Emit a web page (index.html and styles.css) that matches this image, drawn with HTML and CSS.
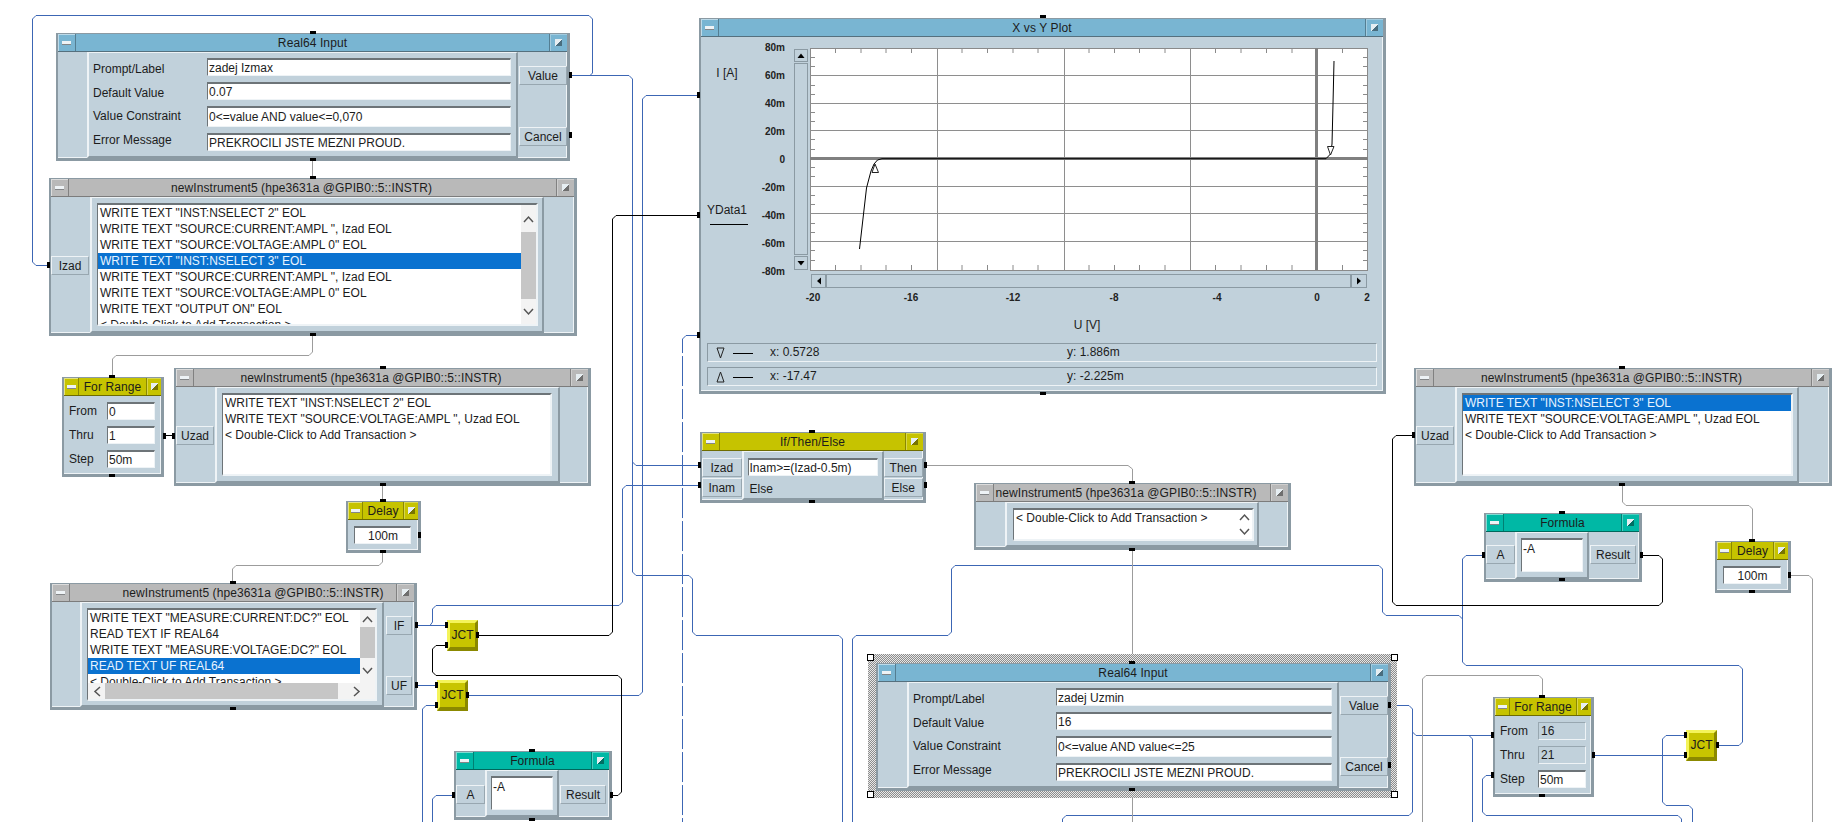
FILE: index.html
```html
<!DOCTYPE html>
<html lang="en">

<head>
    <meta charset="UTF-8">
    <title>VEE program</title>
    <link rel="stylesheet" href="styles.css">
</head>

<body>
    <main class="canvas">

        <!-- wires, under the nodes -->
        <svg class="wires" width="1844" height="822">
            <g class="blue">
                <path d="M572 75.5H629L632.5 79V572L636 575.5H689L692.5 579V632L696 635.5H839L842.5 639V822" />
                <path d="M632.5 462L636 465.5H698" />
                <path d="M590 75.5L592.5 73V19L589 15.5H36L32.5 19V262L36 265.5H47" />
                <path d="M698 485.5H626L622.5 489V602L619 605.5H436L432.5 609V622L430 625.5" />
                <path d="M418 625.5H445" />
                <path d="M697 95.5H646L642.5 99V692L639 695.5H469" />
                <path d="M418 685.5H435" />
                <path d="M435 705.5H426L422.5 709V822" />
                <path d="M452 795.5H436L432.5 799V822" />
                <path class="dash" d="M697 335.5H686L682.5 339V822" />
                <path d="M852.5 822V639L856 635.5H948L951.5 632V569L955 565.5H1379L1382.5 569V612L1386 615.5H1459L1462.5 619" />
                <path d="M1482 555.5H1466L1462.5 559V662L1466 665.5H1739L1742.5 669V742L1739 745.5H1719" />
                <path d="M1062.5 822V819L1066 815.5H1409L1412.5 812V709L1409 705.5H1391" />
                <path d="M1412.5 732L1416 735.5H1491" />
                <path d="M1469 735.5L1472.5 739V822" />
                <path d="M1595 755.5H1684" />
                <path d="M1491 775.5H1486L1482.5 779V812L1486 815.5H1678L1681.5 819V822" />
                <path d="M1684 735.5H1666L1662.5 739V802L1666 805.5H1689L1692.5 809V822" />
            </g>
            <g class="black">
                <path d="M479 635.5H609L612.5 632V219L616 215.5H697" />
                <path d="M445 645.5H436L432.5 649V672L436 675.5H618L621.5 679V792L618 795.5H613" />
                <path d="M1643 555.5H1659L1662.5 559V602L1659 605.5H1396L1392.5 602V439L1396 435.5H1412" />
                <path d="M166 435.5H172" />
            </g>
            <g class="gray">
                <path d="M312.5 161V176" />
                <path d="M312.5 336V352L309 355.5H116L112.5 359V375" />
                <path d="M382.5 486V499" />
                <path d="M382.5 553V562L379 565.5H236L232.5 569V581" />
                <path d="M927 465.5H1128L1132.5 469V481" />
                <path d="M1132.5 550V661" />
                <path d="M1132.5 791V822" />
                <path d="M1622.5 486V502L1626 505.5H1749L1752.5 509V539" />
                <path d="M1791 575.5H1809L1812.5 579V822" />
                <path d="M1542.5 695V679L1539 675.5H1426L1422.5 679V822" />
            </g>
        </svg>

        <!-- selected object: hatching and handles -->
        <div class="hatch">
            <span class="handle tl"></span>
            <span class="handle tr"></span>
            <span class="handle bl"></span>
            <span class="handle br"></span>
        </div>

        <!-- Real64 Input -->
        <section class="node real real-a">
            <div class="title blue-bar"><span class="min"></span><span class="name">Real64 Input</span><span class="max"></span></div>
            <div class="body">
                <div class="real-gutter"></div>
                <div class="panel real-panel">
                    <div class="labels">
                        <div>Prompt/Label</div>
                        <div>Default Value</div>
                        <div>Value Constraint</div>
                        <div>Error Message</div>
                    </div>
                    <div class="fields">
                        <div class="field">zadej Izmax</div>
                        <div class="field">0.07</div>
                        <div class="field tall">0&lt;=value AND value&lt;=0,070</div>
                        <div class="field">PREKROCILI JSTE MEZNI PROUD.</div>
                    </div>
                </div>
                <div class="real-side">
                    <div class="btn">Value</div>
                    <div class="btn">Cancel</div>
                </div>
            </div>
        </section>

        <section class="node real real-b">
            <div class="title blue-bar"><span class="min"></span><span class="name">Real64 Input</span><span class="max"></span></div>
            <div class="body">
                <div class="real-gutter"></div>
                <div class="panel real-panel">
                    <div class="labels wide">
                        <div>Prompt/Label</div>
                        <div>Default Value</div>
                        <div>Value Constraint</div>
                        <div>Error Message</div>
                    </div>
                    <div class="fields">
                        <div class="field">zadej Uzmin</div>
                        <div class="field">16</div>
                        <div class="field tall">0&lt;=value AND value&lt;=25</div>
                        <div class="field">PREKROCILI JSTE MEZNI PROUD.</div>
                    </div>
                </div>
                <div class="real-side">
                    <div class="btn">Value</div>
                    <div class="btn">Cancel</div>
                </div>
            </div>
        </section>

        <!-- instrument objects -->
        <section class="node inst inst-a">
            <div class="title gray-bar"><span class="min"></span><span class="name">newInstrument5 (hpe3631a @GPIB0::5::INSTR)</span><span class="max"></span></div>
            <div class="body">
                <div class="gutter"><div class="btn">Izad</div></div>
                <div class="panel">
                    <div class="list">
                        <div class="rows">
                            <div class="row">WRITE TEXT "INST:NSELECT 2" EOL</div>
                            <div class="row">WRITE TEXT "SOURCE:CURRENT:AMPL ", Izad EOL</div>
                            <div class="row">WRITE TEXT "SOURCE:VOLTAGE:AMPL 0" EOL</div>
                            <div class="row sel">WRITE TEXT "INST:NSELECT 3" EOL</div>
                            <div class="row">WRITE TEXT "SOURCE:CURRENT:AMPL ", Izad EOL</div>
                            <div class="row">WRITE TEXT "SOURCE:VOLTAGE:AMPL 0" EOL</div>
                            <div class="row">WRITE TEXT "OUTPUT ON" EOL</div>
                            <div class="row">&lt; Double-Click to Add Transaction &gt;</div>
                        </div>
                        <div class="vscroll">
                            <div class="arrow up-a"><svg width="11" height="8"><path d="M1 7L5.5 2L10 7" /></svg></div>
                            <div class="thumb thumb-a"></div>
                            <div class="arrow"><svg width="11" height="8"><path d="M1 1L5.5 6L10 1" /></svg></div>
                        </div>
                    </div>
                </div>
                <div class="gutter"></div>
            </div>
        </section>

        <section class="node inst inst-b">
            <div class="title gray-bar"><span class="min"></span><span class="name">newInstrument5 (hpe3631a @GPIB0::5::INSTR)</span><span class="max"></span></div>
            <div class="body">
                <div class="gutter"><div class="btn">Uzad</div></div>
                <div class="panel">
                    <div class="list">
                        <div class="rows">
                            <div class="row">WRITE TEXT "INST:NSELECT 2" EOL</div>
                            <div class="row">WRITE TEXT "SOURCE:VOLTAGE:AMPL ", Uzad EOL</div>
                            <div class="row">&lt; Double-Click to Add Transaction &gt;</div>
                        </div>
                    </div>
                </div>
                <div class="gutter"></div>
            </div>
        </section>

        <section class="node inst inst-c">
            <div class="title gray-bar"><span class="min"></span><span class="name">newInstrument5 (hpe3631a @GPIB0::5::INSTR)</span><span class="max"></span></div>
            <div class="body">
                <div class="gutter"></div>
                <div class="panel">
                    <div class="list stacked">
                        <div class="list-top">
                            <div class="rows">
                                <div class="row">WRITE TEXT "MEASURE:CURRENT:DC?" EOL</div>
                                <div class="row">READ TEXT IF REAL64</div>
                                <div class="row">WRITE TEXT "MEASURE:VOLTAGE:DC?" EOL</div>
                                <div class="row sel">READ TEXT UF REAL64</div>
                                <div class="row">&lt; Double-Click to Add Transaction &gt;</div>
                            </div>
                            <div class="vscroll">
                                <div class="arrow up-c"><svg width="11" height="8"><path d="M1 7L5.5 2L10 7" /></svg></div>
                                <div class="thumb thumb-c"></div>
                                <div class="arrow"><svg width="11" height="8"><path d="M1 1L5.5 6L10 1" /></svg></div>
                            </div>
                        </div>
                        <div class="hscroll">
                            <div class="arrow left-c"><svg width="8" height="11"><path d="M7 1L2 5.5L7 10" /></svg></div>
                            <div class="thumb thumb-h"></div>
                            <div class="arrow"><svg width="8" height="11"><path d="M1 1L6 5.5L1 10" /></svg></div>
                        </div>
                    </div>
                </div>
                <div class="side-c">
                    <div class="btn">IF</div>
                    <div class="btn">UF</div>
                </div>
            </div>
        </section>

        <section class="node inst inst-d">
            <div class="title gray-bar"><span class="min"></span><span class="name">newInstrument5 (hpe3631a @GPIB0::5::INSTR)</span><span class="max"></span></div>
            <div class="body">
                <div class="gutter"></div>
                <div class="panel">
                    <div class="list">
                        <div class="rows">
                            <div class="row">&lt; Double-Click to Add Transaction &gt;</div>
                        </div>
                        <div class="vscroll plain">
                            <div class="arrow"><svg width="11" height="8"><path d="M1 7L5.5 2L10 7" /></svg></div>
                            <div class="arrow"><svg width="11" height="8"><path d="M1 1L5.5 6L10 1" /></svg></div>
                        </div>
                    </div>
                </div>
                <div class="gutter"></div>
            </div>
        </section>

        <section class="node inst inst-e">
            <div class="title gray-bar"><span class="min"></span><span class="name">newInstrument5 (hpe3631a @GPIB0::5::INSTR)</span><span class="max"></span></div>
            <div class="body">
                <div class="gutter"><div class="btn">Uzad</div></div>
                <div class="panel">
                    <div class="list">
                        <div class="rows">
                            <div class="row sel">WRITE TEXT "INST:NSELECT 3" EOL</div>
                            <div class="row">WRITE TEXT "SOURCE:VOLTAGE:AMPL ", Uzad EOL</div>
                            <div class="row">&lt; Double-Click to Add Transaction &gt;</div>
                        </div>
                    </div>
                </div>
                <div class="gutter"></div>
            </div>
        </section>

        <!-- For Range -->
        <section class="node range range-a">
            <div class="title yellow-bar"><span class="min small"></span><span class="name">For Range</span><span class="max small"></span></div>
            <div class="range-grid">
                <div>From</div><div class="field">0</div>
                <div>Thru</div><div class="field">1</div>
                <div>Step</div><div class="field">50m</div>
            </div>
        </section>

        <section class="node range range-b">
            <div class="title yellow-bar"><span class="min small"></span><span class="name">For Range</span><span class="max small"></span></div>
            <div class="range-grid">
                <div>From</div><div class="field locked">16</div>
                <div>Thru</div><div class="field locked">21</div>
                <div>Step</div><div class="field">50m</div>
            </div>
        </section>

        <!-- Delay -->
        <section class="node delay delay-a">
            <div class="title yellow-bar"><span class="min small"></span><span class="name">Delay</span><span class="max small"></span></div>
            <div class="delay-body"><div class="field center">100m</div></div>
        </section>

        <section class="node delay delay-b">
            <div class="title yellow-bar"><span class="min small"></span><span class="name">Delay</span><span class="max small"></span></div>
            <div class="delay-body"><div class="field center">100m</div></div>
        </section>

        <!-- Formula -->
        <section class="node formula formula-a">
            <div class="title teal-bar"><span class="min"></span><span class="name">Formula</span><span class="max"></span></div>
            <div class="body">
                <div class="formula-in"><div class="btn">A</div></div>
                <div class="panel formula-panel"><div class="field expr">-A</div></div>
                <div class="formula-out"><div class="btn">Result</div></div>
            </div>
        </section>

        <section class="node formula formula-b">
            <div class="title teal-bar"><span class="min"></span><span class="name">Formula</span><span class="max"></span></div>
            <div class="body">
                <div class="formula-in"><div class="btn">A</div></div>
                <div class="panel formula-panel"><div class="field expr">-A</div></div>
                <div class="formula-out"><div class="btn">Result</div></div>
            </div>
        </section>

        <!-- If/Then/Else -->
        <section class="node ifelse">
            <div class="title yellow-bar"><span class="min"></span><span class="name">If/Then/Else</span><span class="max"></span></div>
            <div class="body">
                <div class="if-side">
                    <div class="btn">Izad</div>
                    <div class="btn">Inam</div>
                </div>
                <div class="panel if-panel">
                    <div class="field">Inam&gt;=(Izad-0.5m)</div>
                    <div class="else">Else</div>
                </div>
                <div class="if-side">
                    <div class="btn">Then</div>
                    <div class="btn">Else</div>
                </div>
            </div>
        </section>

        <!-- junctions -->
        <div class="jct jct-a">JCT</div>
        <div class="jct jct-b">JCT</div>
        <div class="jct jct-c">JCT</div>

        <!-- X vs Y Plot -->
        <section class="node plot">
            <div class="title blue-bar"><span class="min"></span><span class="name">X vs Y Plot</span><span class="max"></span></div>
            <div class="plot-body">
                <svg class="chart" width="682" height="306" viewBox="701 36 682 306">
                    <rect class="area" x="810.5" y="47.5" width="557" height="222" />
                    <path class="tick" d="M835.5 47v5M861 47v5M886 47v5M911.5 47v5M962 47v5M987.5 47v5M1013 47v5M1038 47v5M1089 47v5M1114.5 47v5M1139.5 47v5M1165 47v5M1215.5 47v5M1241 47v5M1266.5 47v5M1292 47v5M1342.5 47v5M835.5 264v5M861 264v5M886 264v5M911.5 264v5M962 264v5M987.5 264v5M1013 264v5M1038 264v5M1089 264v5M1114.5 264v5M1139.5 264v5M1165 264v5M1215.5 264v5M1241 264v5M1266.5 264v5M1292 264v5M1342.5 264v5" />
                    <path class="tick" d="M810 56.5h5M810 65.5h5M810 84.5h5M810 93.5h5M810 111.5h5M810 120.5h5M810 138.5h5M810 148.5h5M810 166.5h5M810 175.5h5M810 194.5h5M810 203.5h5M810 222.5h5M810 231.5h5M810 249.5h5M810 259.5h5M1363 56.5h5M1363 65.5h5M1363 84.5h5M1363 93.5h5M1363 111.5h5M1363 120.5h5M1363 138.5h5M1363 148.5h5M1363 166.5h5M1363 175.5h5M1363 194.5h5M1363 203.5h5M1363 222.5h5M1363 231.5h5M1363 249.5h5M1363 259.5h5" />
                    <path class="grid" d="M937.5 47v222M1064.5 47v222M1190.5 47v222M810 74.5h558M810 102.5h558M810 129.5h558M810 185.5h558M810 212.5h558M810 240.5h558" />
                    <path class="grid major" d="M1316.5 47v222M810 157.5h558" />
                    <path class="curve" d="M859.5 248L866.5 187L871 170L874 163L877.5 159L882 157.7H1326L1330.5 153L1332 143L1333 103L1334 60" />
                    <path class="marker" d="M875 163L872 171.5H878.5Z" />
                    <path class="marker" d="M1327.5 145.5H1334L1330.5 154Z" />

                    <!-- scrollbars -->
                    <rect class="sb" x="794.5" y="48.5" width="13" height="12" />
                    <rect class="sb" x="794.5" y="62.5" width="13" height="191" />
                    <rect class="sb" x="794.5" y="255.5" width="13" height="13" />
                    <path class="tri" d="M797.5 57L801 52.5L804.5 57Z" />
                    <path class="tri" d="M797.5 260L801 264.5L804.5 260Z" />
                    <rect class="sb" x="811.5" y="273.5" width="14" height="13" />
                    <rect class="sb" x="826.5" y="273.5" width="524" height="13" />
                    <rect class="sb" x="1351.5" y="273.5" width="15" height="13" />
                    <path class="tri" d="M821 276.5L817 280L821 283.5Z" />
                    <path class="tri" d="M1357 276.5L1361 280L1357 283.5Z" />

                    <!-- axis text -->
                    <g class="ylab">
                        <text x="785" y="50">80m</text>
                        <text x="785" y="78">60m</text>
                        <text x="785" y="106">40m</text>
                        <text x="785" y="134">20m</text>
                        <text x="785" y="162">0</text>
                        <text x="785" y="190">-20m</text>
                        <text x="785" y="218">-40m</text>
                        <text x="785" y="246">-60m</text>
                        <text x="785" y="274">-80m</text>
                    </g>
                    <g class="xlab">
                        <text x="813" y="300">-20</text>
                        <text x="911" y="300">-16</text>
                        <text x="1013" y="300">-12</text>
                        <text x="1114" y="300">-8</text>
                        <text x="1217" y="300">-4</text>
                        <text x="1317" y="300">0</text>
                        <text x="1367" y="300">2</text>
                    </g>
                    <text class="axname" x="727" y="76">I [A]</text>
                    <text class="axname" x="1087" y="328">U [V]</text>
                    <text class="axname" x="727" y="213">YData1</text>
                    <path class="curve" d="M710 223.5h38" />
                </svg>
                <div class="cursor">
                    <svg class="cursor-mark" width="44" height="14"><path d="M1 2H8L4.5 12Z" /><path class="stem" d="M17 7.5H37" /></svg>
                    <span class="cx">x: 0.5728</span>
                    <span>y: 1.886m</span>
                </div>
                <div class="cursor">
                    <svg class="cursor-mark" width="44" height="14"><path d="M4.5 2L1 12H8Z" /><path class="stem" d="M17 7.5H37" /></svg>
                    <span class="cx">x: -17.47</span>
                    <span>y: -2.225m</span>
                </div>
            </div>
        </section>

        <!-- pins, over the nodes -->
        <svg class="pins" width="1844" height="822">
            <g class="pin-h">
                <rect x="310" y="31" /><rect x="310" y="158" />
                <rect x="310" y="176" /><rect x="310" y="333" />
                <rect x="109" y="375" /><rect x="109" y="474" />
                <rect x="380" y="366" /><rect x="380" y="483" />
                <rect x="380" y="499" /><rect x="380" y="550" />
                <rect x="230" y="581" /><rect x="230" y="707" />
                <rect x="529" y="749" /><rect x="529" y="818" />
                <rect x="1040" y="15" /><rect x="1040" y="392" />
                <rect x="809" y="430" /><rect x="809" y="500" />
                <rect x="1129" y="481" /><rect x="1129" y="548" />
                <rect x="1129" y="661" /><rect x="1129" y="788" />
                <rect x="1619" y="366" /><rect x="1619" y="483" />
                <rect x="1559" y="511" /><rect x="1559" y="578" />
                <rect x="1749" y="539" /><rect x="1749" y="590" />
                <rect x="1539" y="695" /><rect x="1539" y="794" />
            </g>
            <g class="pin-v">
                <rect x="569" y="72" /><rect x="569" y="132" />
                <rect x="47" y="262" />
                <rect x="163" y="433" />
                <rect x="172" y="433" />
                <rect x="418" y="532" />
                <rect x="415" y="622" /><rect x="415" y="682" />
                <rect x="445" y="622" /><rect x="445" y="642" /><rect x="476" y="632" />
                <rect x="435" y="682" /><rect x="435" y="702" /><rect x="466" y="692" />
                <rect x="452" y="792" /><rect x="610" y="792" />
                <rect x="697" y="92" /><rect x="697" y="212" /><rect x="697" y="332" />
                <rect x="698" y="462" /><rect x="698" y="482" />
                <rect x="924" y="462" /><rect x="924" y="482" />
                <rect x="1388" y="702" /><rect x="1388" y="762" />
                <rect x="1412" y="432" />
                <rect x="1482" y="552" /><rect x="1640" y="552" />
                <rect x="1788" y="572" />
                <rect x="1491" y="732" /><rect x="1491" y="772" /><rect x="1592" y="752" />
                <rect x="1684" y="732" /><rect x="1684" y="752" /><rect x="1716" y="742" />
            </g>
        </svg>
    </main>
</body>

</html>
```

FILE: styles.css
```css
* {
    margin: 0;
    padding: 0;
    box-sizing: border-box;
}

body {
    width: 1844px;
    height: 822px;
    overflow: hidden;
    background-color: #fff;
    font-family: "Liberation Sans", Arial, sans-serif;
    font-size: 12px;
    color: #1c1c1c;
}

.canvas {
    position: relative;
    width: 1844px;
    height: 822px;
    overflow: hidden;
}

/* wires and pins */

.wires,
.pins {
    position: absolute;
    top: 0;
    left: 0;
}

.wires path {
    fill: none;
    stroke-width: 1;
}

.blue path {
    stroke: #3c66b4;
}

.black path {
    stroke: #000;
}

.gray path {
    stroke: #9c9c9c;
}

.wires .dash {
    stroke-dasharray: 30 3;
}

.pins rect {
    fill: #000;
}

.pin-h rect {
    width: 6px;
    height: 3px;
}

.pin-v rect {
    width: 3px;
    height: 6px;
}

/* node frame */

.node {
    position: absolute;
    display: flex;
    flex-direction: column;
    background-color: #c1d1db;
    border-style: solid;
    border-color: #8b9aa3;
    border-width: 1px 3px 3px 2px;
    box-shadow: inset -1px -1px 0 #eef3f6;
}

.title {
    flex: none;
    display: flex;
    height: 18px;
    line-height: 18px;
    border-bottom: 1px solid #55707e;
}

.blue-bar {
    background-color: #79b5d2;
}

.gray-bar {
    background-color: #b9b9b9;
    border-bottom-color: #7c7c7c;
}

.yellow-bar {
    background-color: #c6c300;
    border-bottom-color: #6e6c00;
}

.teal-bar {
    background-color: #00b8a5;
    border-bottom-color: #00685c;
}

.name {
    flex: 1;
    min-width: 0;
    text-align: center;
    letter-spacing: .1px;
    white-space: nowrap;
}

.min,
.max {
    flex: none;
    display: flex;
    align-items: center;
    justify-content: center;
    width: 18px;
}

.min {
    border-right: 1px solid rgba(0, 0, 0, .3);
    box-shadow: inset 1px 1px 0 rgba(255, 255, 255, .5);
}

.max {
    border-left: 1px solid rgba(0, 0, 0, .3);
    box-shadow: inset 1px 1px 0 rgba(255, 255, 255, .3);
}

.min::after {
    content: "";
    width: 9px;
    height: 3px;
    background-color: #eef3f6;
    border-bottom: 1px solid rgba(0, 0, 0, .45);
}

/* little square, light corner over dark corner */
.max::after {
    content: "";
    width: 7px;
    height: 7px;
    background-image: linear-gradient(135deg, #e6eef2 0 55%, rgba(0, 0, 0, .4) 55%);
}

.small {
    width: 15px;
}

.body {
    flex: 1;
    display: flex;
    min-height: 0;
}

.panel {
    background-color: #c1d1db;
    border-style: solid;
    border-color: #eef3f6 #8b9aa3 #8b9aa3 #eef3f6;
    border-width: 1px 2px 2px 2px;
}

.btn {
    height: 19px;
    line-height: 18px;
    text-align: center;
    background-color: #c1d1db;
    border-style: solid;
    border-color: #eef3f6 #98a7b0 #98a7b0 #eef3f6;
    border-width: 1px;
}

.field {
    height: 18px;
    line-height: 16px;
    padding-left: 1px;
    background-color: #fff;
    white-space: nowrap;
    overflow: hidden;
    border-style: solid;
    border-color: #6d7478 #eef3f6 #eef3f6 #6d7478;
    border-width: 2px 1px 1px 1px;
}

.locked {
    background-color: #c1d1db;
    border-color: #98a7b0 #eef3f6 #eef3f6 #98a7b0;
    border-width: 1px;
    padding-left: 2px;
}

.center {
    text-align: center;
}

/* Real64 Input */

.real {
    width: 514px;
    height: 128px;
}

.real-a {
    left: 56px;
    top: 33px;
}

.real-b {
    left: 876px;
    top: 663px;
    width: 515px;
}

.real-gutter {
    flex: none;
    width: 29px;
}

.real-panel {
    flex: 1;
    display: flex;
    padding: 4px 5px 0 4px;
}

.labels {
    flex: none;
    width: 114px;
    padding-top: 1px;
    line-height: 23.67px;
}

.labels.wide {
    width: 143px;
}

.fields {
    flex: 1;
    display: grid;
    grid-template-rows: 18px 18px 21px 18px;
    grid-auto-rows: 18px;
    align-content: start;
    row-gap: 6px;
    padding-top: 1px;
}

.fields .field {
    height: auto;
}

.fields .tall {
    line-height: 18px;
}

.real-side {
    flex: none;
    width: 49px;
    padding: 14px 0 0 1px;
    display: flex;
    flex-direction: column;
    gap: 42px;
}

/* instrument objects */

.inst-a {
    left: 49px;
    top: 178px;
    width: 528px;
    height: 158px;
}

.inst-b {
    left: 174px;
    top: 368px;
    width: 417px;
    height: 118px;
}

.inst-c {
    left: 50px;
    top: 583px;
    width: 367px;
    height: 127px;
}

.inst-d {
    left: 974px;
    top: 483px;
    width: 317px;
    height: 67px;
}

.inst-e {
    left: 1414px;
    top: 368px;
    width: 418px;
    height: 118px;
}

/* the names do not sit in the middle of these title bars */
.inst-a .name,
.inst-b .name,
.inst-e .name {
    padding-right: 22px;
}

.inst-c .name {
    padding-left: 40px;
}

.inst-d .name {
    padding-right: 12px;
}

.gutter {
    flex: 1;
}

.gutter .btn {
    margin-right: 1px;
}

.inst-a .gutter:first-child {
    flex: none;
    width: 39px;
    padding-top: 59px;
}

.inst-b .gutter:first-child,
.inst-e .gutter:first-child {
    flex: none;
    width: 39px;
    padding-top: 39px;
}

.inst-c .gutter:first-child {
    flex: none;
    width: 28px;
}

.inst-d .gutter:first-child {
    flex: none;
    width: 29px;
}

.inst .panel {
    flex: none;
    padding: 5px 0 0 5px;
}

.inst-a .panel {
    width: 454px;
}

.inst-b .panel {
    width: 345px;
}

.inst-c .panel {
    width: 304px;
}

.inst-d .panel {
    width: 254px;
}

.inst-e .panel {
    width: 344px;
}

.list {
    display: flex;
    background-color: #fff;
    overflow: hidden;
    border-style: solid;
    border-color: #6d7478 #eef3f6 #eef3f6 #6d7478;
    border-width: 2px 2px 2px 1px;
}

.inst-a .list {
    width: 441px;
    height: 123px;
}

.inst-b .list {
    width: 330px;
    height: 83px;
}

.inst-c .list {
    width: 290px;
    height: 93px;
}

.inst-d .list {
    width: 241px;
    height: 33px;
    margin-left: 1px;
}

.inst-e .list {
    width: 331px;
    height: 83px;
}

.stacked {
    flex-direction: column;
}

.list-top {
    flex: none;
    display: flex;
    height: 73px;
    overflow: hidden;
}

.rows {
    flex: 1;
    min-width: 0;
    overflow: hidden;
}

.row {
    height: 16px;
    line-height: 17px;
    padding-left: 2px;
    white-space: nowrap;
}

.sel {
    background-color: #0a72d0;
    color: #e8f4ff;
}

.vscroll {
    flex: none;
    display: flex;
    flex-direction: column;
    width: 15px;
    background-color: #f3f3f3;
}

.plain {
    background-color: #fff;
}

.arrow {
    flex: 1;
    min-height: 0;
    min-width: 0;
    display: flex;
    align-items: center;
    justify-content: center;
}

.arrow path {
    fill: none;
    stroke: #555;
    stroke-width: 1.5;
}

.thumb {
    flex: none;
    background-color: #c6c6c6;
}

.up-a {
    flex: none;
    height: 27px;
}

.thumb-a {
    height: 67px;
}

.up-c {
    flex: none;
    height: 17px;
}

.thumb-c {
    height: 31px;
}

.hscroll {
    flex: 1;
    display: flex;
    background-color: #f3f3f3;
}

.left-c {
    flex: none;
    width: 17px;
}

.thumb-h {
    width: 233px;
}

.side-c {
    flex: 1;
    display: flex;
    flex-direction: column;
    gap: 41px;
    padding: 14px 2px 0 2px;
}

/* For Range */

.range {
    width: 102px;
    height: 100px;
}

.range-a {
    left: 62px;
    top: 377px;
}

.range-b {
    left: 1493px;
    top: 697px;
    width: 101px;
}

.range-grid {
    display: grid;
    grid-template-columns: 38px 48px;
    grid-template-rows: repeat(3, 18px);
    row-gap: 6px;
    align-items: center;
    padding: 6px 0 0 5px;
}

/* Delay */

.delay {
    width: 75px;
    height: 52px;
}

.delay-a {
    left: 346px;
    top: 501px;
}

.delay-b {
    left: 1715px;
    top: 541px;
    width: 76px;
}

.delay-body {
    padding: 6px 7px 0 6px;
}

/* Formula */

.formula {
    width: 158px;
    height: 69px;
}

.formula-a {
    left: 454px;
    top: 751px;
}

.formula-b {
    left: 1484px;
    top: 513px;
}

.formula-in {
    flex: none;
    width: 29px;
    padding: 15px 0 0 0;
}

.formula-out {
    flex: 1;
    padding: 15px 3px 0 1px;
}

.formula-b .formula-in,
.formula-b .formula-out {
    padding-top: 13px;
}

.formula-panel {
    flex: none;
    width: 74px;
    padding: 5px 4px 5px 4px;
}

.expr {
    height: 100%;
    line-height: 18px;
}

/* If/Then/Else */

.ifelse {
    left: 700px;
    top: 432px;
    width: 226px;
    height: 71px;
}

.if-side {
    flex: 1;
    display: flex;
    flex-direction: column;
    gap: 1px;
    padding-top: 7px;
}

.if-panel {
    flex: none;
    width: 142px;
    padding: 6px 4px 0 4px;
}

.else {
    padding: 6px 0 0 2px;
}

/* junction */

.jct {
    position: absolute;
    width: 31px;
    height: 31px;
    line-height: 24px;
    text-align: center;
    background-color: #c8c500;
    border-style: solid;
    border-color: #f4f45a #8b8900 #8b8900 #f4f45a;
    border-width: 3px 3px 4px 3px;
}

.jct-a {
    left: 447px;
    top: 620px;
}

.jct-b {
    left: 437px;
    top: 680px;
}

.jct-c {
    left: 1686px;
    top: 730px;
}

/* selection */

.hatch {
    position: absolute;
    left: 868px;
    top: 654px;
    width: 529px;
    height: 144px;
    background: conic-gradient(#8c8c8c 25%, #e8e8e8 0 50%, #8c8c8c 0 75%, #e8e8e8 0) 0 0 / 2px 2px;
}

.handle {
    position: absolute;
    width: 7px;
    height: 7px;
    background-color: #fff;
    border: 1px solid #000;
}

.tl {
    left: -1px;
    top: 0;
}

.tr {
    right: -1px;
    top: 0;
}

.bl {
    left: -1px;
    bottom: 0;
}

.br {
    right: -1px;
    bottom: 0;
}

/* X vs Y Plot */

.plot {
    left: 699px;
    top: 18px;
    width: 687px;
    height: 376px;
}

.plot-body {
    flex: 1;
    display: flex;
    flex-direction: column;
    gap: 5px;
}

.chart {
    display: block;
    flex: none;
    margin-bottom: -5px;
}

.area {
    fill: #fff;
    stroke: #8a8a8a;
}

.tick {
    fill: none;
    stroke: #8a8a8a;
}

.grid {
    fill: none;
    stroke: #8e8e8e;
}

.major {
    stroke-width: 3;
    stroke: #808080;
}

.curve {
    fill: none;
    stroke: #000;
    stroke-width: 1;
}

.marker {
    fill: #fff;
    stroke: #222;
}

.sb {
    fill: #c1d1db;
    stroke: #8b9aa3;
}

.tri {
    fill: #000;
}

.ylab text {
    font-size: 10px;
    font-weight: bold;
    text-anchor: end;
    fill: #222;
}

.xlab text {
    font-size: 10px;
    font-weight: bold;
    text-anchor: middle;
    fill: #222;
}

.axname {
    font-size: 12px;
    text-anchor: middle;
    fill: #1c1c1c;
}

.cursor {
    flex: none;
    display: flex;
    align-items: center;
    height: 19px;
    margin: 0 6px;
    border-style: solid;
    border-color: #8b9aa3 #eef3f6 #eef3f6 #8b9aa3;
    border-width: 1px;
    line-height: 17px;
}

.cursor-mark {
    flex: none;
    margin-left: 8px;
}

.cursor-mark path {
    fill: none;
    stroke: #222;
}

.cursor .stem {
    stroke: #000;
}

.cx {
    flex: none;
    width: 297px;
    margin-left: 10px;
}
```
